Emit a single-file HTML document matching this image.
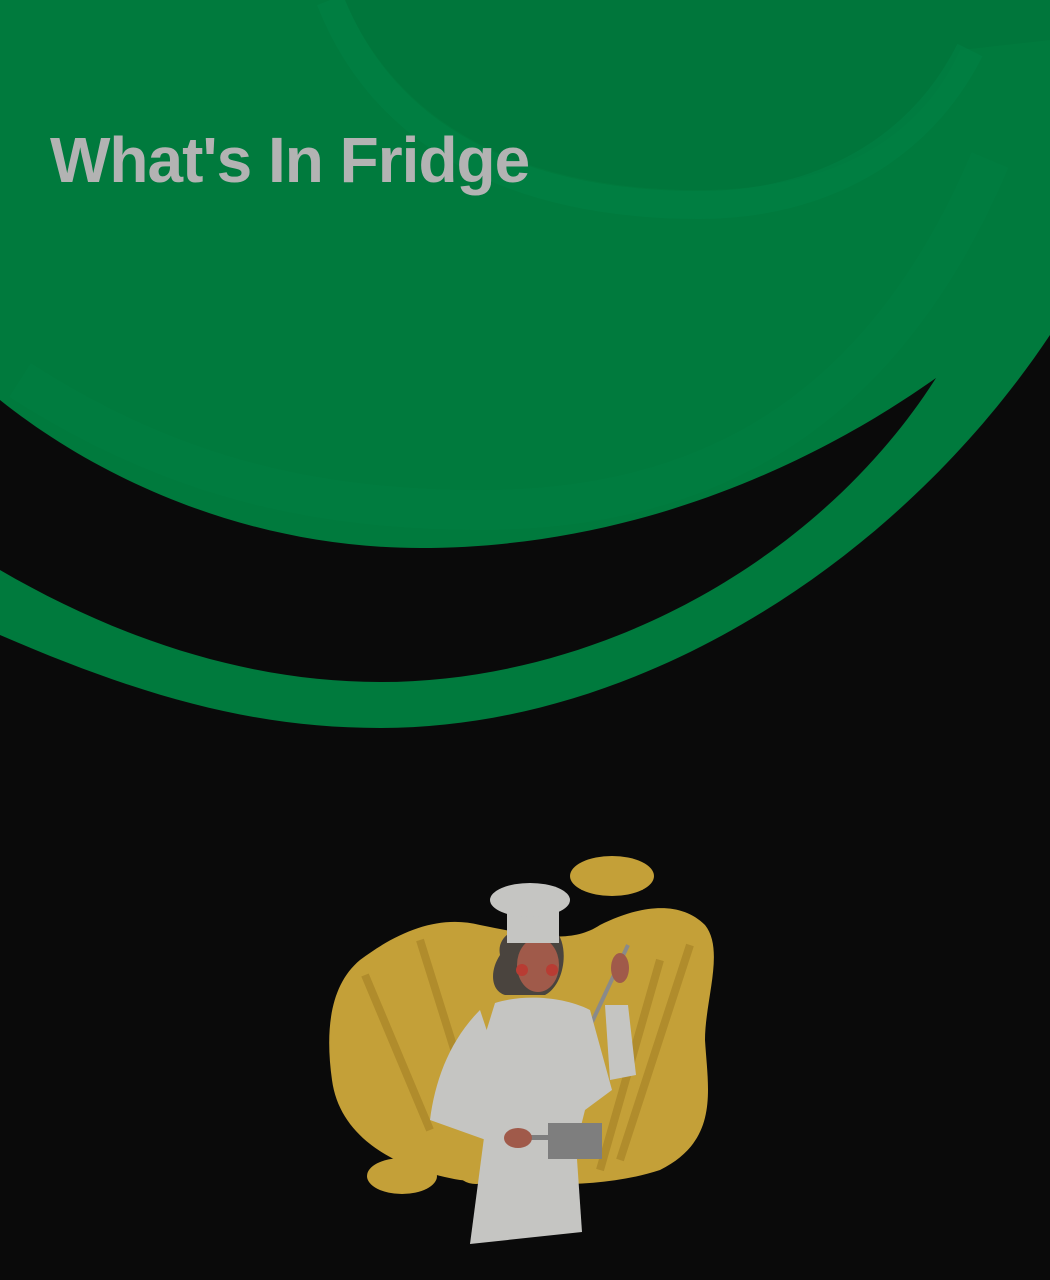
<!DOCTYPE html>
<html><head><meta charset="utf-8"><style>
html,body{margin:0;padding:0;background:#0a0a0a;width:1050px;height:1280px;overflow:hidden}
svg{position:absolute;left:0;top:0}
h1{position:absolute;left:50px;top:123px;margin:0;font-family:"Liberation Sans",sans-serif;font-weight:bold;font-size:64px;letter-spacing:-1px;color:#b3b3b3}
</style></head><body>
<svg width="1050" height="1280" viewBox="0 0 1050 1280">
<rect width="1050" height="1280" fill="#0a0a0a"/>
<path d="M0,635 C150,700 260,728 380,728 C640,728 900,560 1050,335 L1050,0 L0,0 Z" fill="#007a3d"/>
<path d="M0,570 C120,640 250,682 380,682 C600,682 820,560 936,378 C820,460 640,548 420,548 C250,548 100,480 0,400 Z" fill="#0a0a0a"/>
<path d="M345,0 C400,130 530,190 700,190 C830,190 920,140 960,50 L1050,40 L1050,0 Z" fill="#00763b"/>
<path d="M330,0 C385,140 520,205 700,205 C820,205 920,150 970,50" fill="none" stroke="#008145" stroke-width="28" opacity="0.6"/>
<path d="M20,380 C160,470 300,510 480,510 C700,510 880,420 990,160" fill="none" stroke="#008145" stroke-width="40" opacity="0.35"/>
<!-- chef illustration -->
<ellipse cx="612" cy="876" rx="42" ry="20" fill="#c4a038"/>
<ellipse cx="402" cy="1176" rx="35" ry="18" fill="#c4a038"/>
<ellipse cx="476" cy="1172" rx="18" ry="12" fill="#c4a038"/>
<path d="M360,960 C400,930 440,915 480,925 C530,935 570,945 600,925 C640,905 680,900 705,925 C725,950 705,1000 705,1040 C708,1090 720,1140 660,1170 C600,1190 520,1185 460,1180 C400,1170 340,1140 332,1080 C325,1030 330,985 360,960 Z" fill="#c4a038"/>
<path d="M365,975 L430,1130 M420,940 L470,1100 M690,945 L620,1160 M660,960 L600,1170" stroke="#b08c2c" stroke-width="8" fill="none"/>
<!-- hair -->
<path d="M500,955 C495,930 530,920 555,930 C570,945 565,985 545,995 L505,995 C490,990 490,970 500,955 Z" fill="#4a443e"/>
<ellipse cx="538" cy="965" rx="21" ry="27" fill="#a05a4a"/>
<circle cx="522" cy="970" r="6" fill="#b83c33"/><circle cx="552" cy="970" r="6" fill="#b83c33"/>
<rect x="507" y="905" width="52" height="38" fill="#c5c5c2"/>
<ellipse cx="530" cy="900" rx="40" ry="17" fill="#c5c5c2"/>
<path d="M628,945 L592,1022" stroke="#8a8a8a" stroke-width="4"/>
<path d="M555,1023 L585,1023 C585,1035 560,1040 555,1023 Z" fill="#8a8a8a"/>
<path d="M605,1005 L628,1005 L636,1075 L610,1080 Z" fill="#c5c5c2"/>
<ellipse cx="620" cy="968" rx="9" ry="15" fill="#a05a4a"/>
<path d="M495,1003 C520,995 560,995 590,1010 L612,1090 L585,1110 L580,1130 L470,1130 L465,1100 Z" fill="#c5c5c2"/>
<path d="M480,1010 C450,1040 435,1080 430,1120 L500,1145 L500,1125 L470,1110 L490,1040 Z" fill="#c5c5c2"/>
<path d="M485,1130 L575,1130 L582,1232 L470,1244 Z" fill="#c5c5c2"/>
<rect x="548" y="1123" width="54" height="36" fill="#7e7e7e"/>
<rect x="530" y="1135" width="20" height="5" fill="#7e7e7e"/>
<ellipse cx="518" cy="1138" rx="14" ry="10" fill="#a05a4a"/>
</svg>
<h1>What's In Fridge</h1>
</body></html>
